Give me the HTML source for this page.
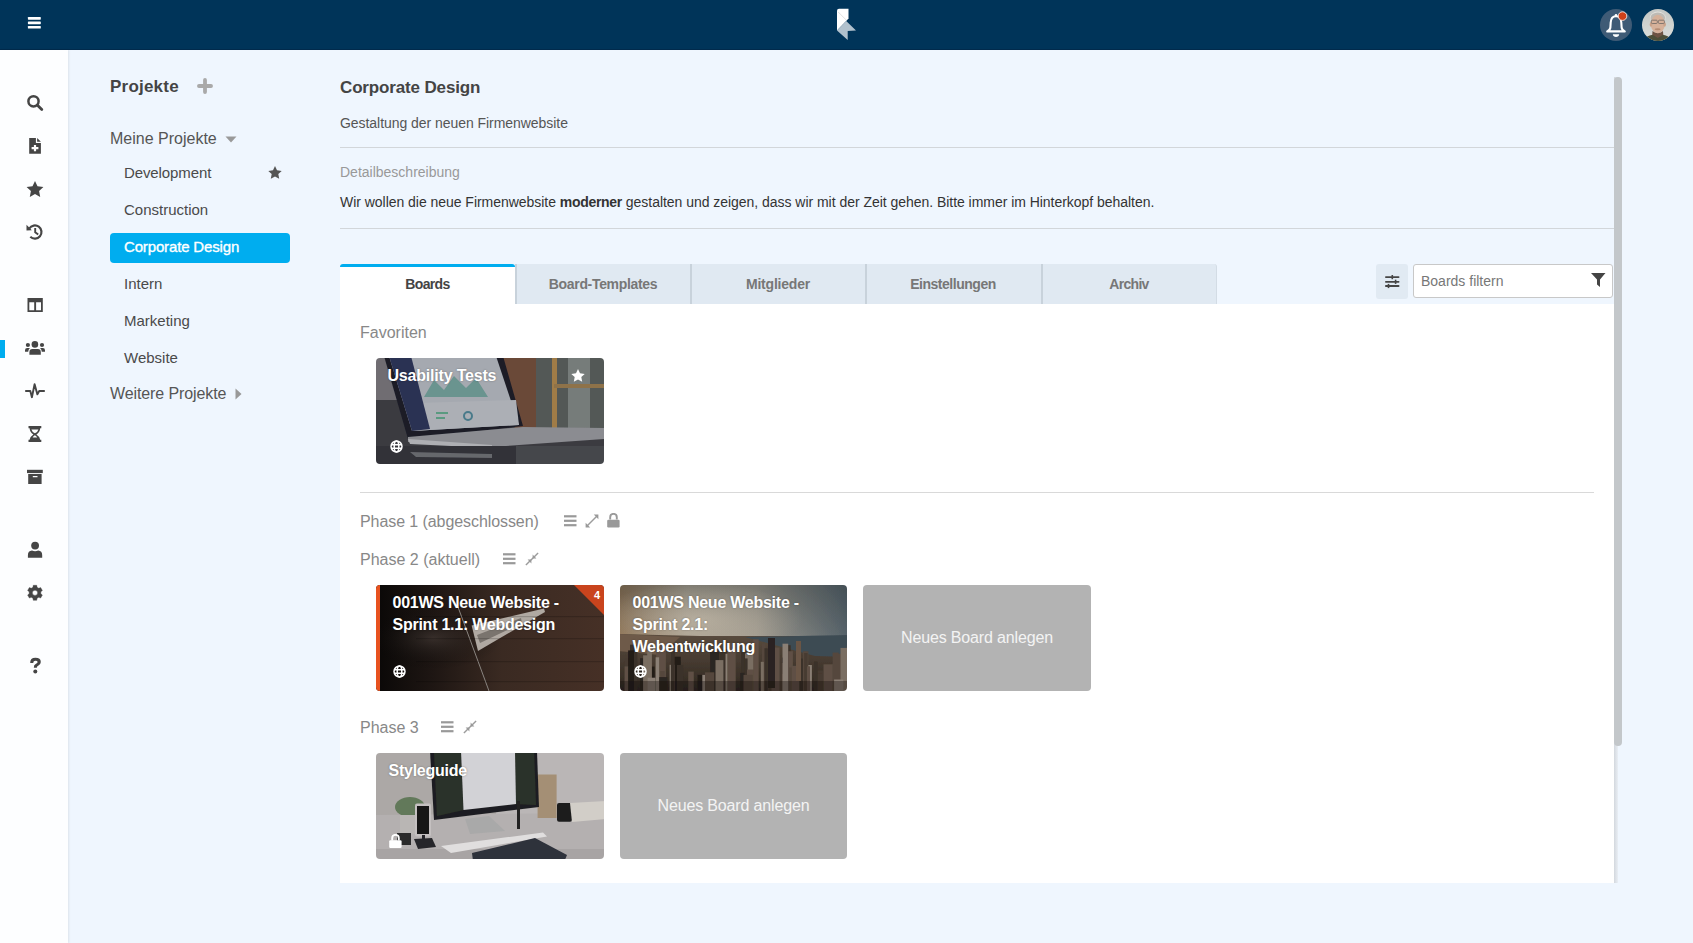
<!DOCTYPE html>
<html><head><meta charset="utf-8">
<style>
*{box-sizing:border-box;margin:0;padding:0}
html,body{width:1693px;height:943px;overflow:hidden;background:#eff6fe;font-family:"Liberation Sans",sans-serif;color:#444}
.abs{position:absolute}
.t{position:absolute;white-space:nowrap;line-height:1}
#hdr{left:0;top:0;width:1693px;height:50px;background:#003459;border-bottom:1px solid #012a4c}
#side{left:0;top:50px;width:68px;height:893px;background:#fdfeff;box-shadow:1px 0 2px rgba(0,0,0,0.08)}
.ic{position:absolute;fill:#454545}
.proj{position:absolute;left:124px;font-size:15px;color:#4a4a4a}
</style></head><body>
<div id="hdr" class="abs">
  <svg class="abs" style="left:27px;top:16px" width="15" height="14" viewBox="0 0 15 14"><rect x="0.9" y="1" width="12.9" height="2.7" rx="0.6" fill="#fff"/><rect x="0.9" y="5.45" width="12.9" height="2.7" rx="0.6" fill="#fff"/><rect x="0.9" y="9.9" width="12.9" height="2.7" rx="0.6" fill="#fff"/></svg>
  <svg class="abs" style="left:830px;top:0" width="34" height="50" viewBox="830 0 34 50">
    <path d="M839 8.7 L848.5 8.7 L848.5 18.6 L846.2 21.1 L837 30.6 L837 10.7 Q837 8.7 839 8.7Z" fill="#fff"/>
    <path d="M838 11.8 L846.2 20" stroke="#d8d8d8" stroke-width="0.8"/>
    <path d="M846.2 21.1 L856 30.6 L847.7 30.9 L847.7 40.1 L837 30.6Z" fill="#b1c1cd"/>
  </svg>
  <div class="abs" style="left:1600px;top:9px;width:32px;height:32px;border-radius:50%;background:#3f5b76"></div>
  <svg class="abs" style="left:1600px;top:9px" width="32" height="32" viewBox="0 0 32 32">
    <circle cx="16" cy="6.2" r="1.3" fill="#fff"/><path d="M16 7.2 C12.6 7.2 10.9 9.8 10.7 13.5 L10.4 18.3 C10.2 20.4 8.7 21.6 7.2 22.4 H24.8 C23.3 21.6 21.8 20.4 21.6 18.3 L21.3 13.5 C21.1 9.8 19.4 7.2 16 7.2Z" fill="none" stroke="#fff" stroke-width="2.1" stroke-linejoin="round"/>
    <path d="M12.8 25.2 H19.2 Q18.8 27.9 16 27.9 Q13.2 27.9 12.8 25.2Z" fill="#fff"/>
    <circle cx="22.5" cy="7.1" r="4.3" fill="#d0411a" stroke="#fff" stroke-width="0.8"/>
  </svg>
  <svg class="abs" style="left:1642px;top:9px" width="32" height="32" viewBox="0 0 32 32">
   <defs><clipPath id="avc"><circle cx="16" cy="16" r="16"/></clipPath><linearGradient id="avg" x1="0" x2="0" y1="0" y2="1"><stop offset="0" stop-color="#c4c7c4"/><stop offset="1" stop-color="#dcdfdc"/></linearGradient></defs>
   <g clip-path="url(#avc)"><rect width="32" height="32" fill="url(#avg)"/>
   <ellipse cx="15.8" cy="8.8" rx="7.9" ry="6.2" fill="#e2e0dc"/><ellipse cx="15.8" cy="9" rx="7.3" ry="5.6" fill="#bdbab4"/>
   <ellipse cx="15.8" cy="15" rx="6.9" ry="9.3" fill="#d6b19a"/>
   <ellipse cx="9" cy="15.5" rx="1.3" ry="2.2" fill="#c9a28a"/>
   <ellipse cx="22.6" cy="15.5" rx="1.3" ry="2.2" fill="#c9a28a"/>
   <rect x="9.3" y="11.2" width="6" height="3.3" rx="1" fill="none" stroke="#7a706a" stroke-width="0.9"/>
   <rect x="16.4" y="11.2" width="6" height="3.3" rx="1" fill="none" stroke="#7a706a" stroke-width="0.9"/>
   <ellipse cx="15.6" cy="20.2" rx="3" ry="1" fill="#b58c74"/>
   <path d="M10.5 22 Q15.8 26.5 21 22 L21.5 30 L10 30Z" fill="#6d5343"/>
   <path d="M1 33 Q4 26.5 10.5 25.8 L15.8 29 L21 25.8 Q27.5 26.5 30 33Z" fill="#4c4f38"/>
   </g></svg>
</div>

<div id="side" class="abs">
</div>
<svg class="abs" style="left:0;top:0" width="68" height="943" viewBox="0 0 68 943">
 <g fill="#454545" stroke="none">
  <!-- search -->
  <circle cx="33.5" cy="101.3" r="5.1" fill="none" stroke="#454545" stroke-width="2.5"/>
  <path d="M37.2 105 L41.8 109.6" stroke="#454545" stroke-width="2.8" stroke-linecap="round"/>
  <!-- file plus -->
  <path d="M29.2 138 H35.9 V142.9 H40.9 V153.7 H29.2Z"/>
  <path d="M37.1 138 L40.9 141.8 H37.1Z"/>
  <path d="M33.9 145 h2.2 v2 h2.3 v2.2 h-2.3 v2 h-2.2 v-2 h-2.3 v-2.2 h2.3z" fill="#fff"/>
  <!-- star -->
  <path d="M35 181 L37.5 186.3 L43.4 187.1 L39.1 191.1 L40.2 196.9 L35 194.1 L29.8 196.9 L30.9 191.1 L26.6 187.1 L32.5 186.3Z"/>
  <!-- history -->
  <path d="M29.3 228.5 A6.6 6.6 0 1 1 30.3 236.8" fill="none" stroke="#454545" stroke-width="2.2"/>
  <path d="M26.5 224.8 L31.8 230.2 L26.5 230.6Z"/>
  <path d="M35.2 228 V232.3 L38.2 234.6" fill="none" stroke="#454545" stroke-width="1.9"/>
  <!-- columns -->
  <path d="M27.5 298 H42.8 V312 H27.5Z M29.3 302.3 V310.2 H34.2 V302.3Z M36.1 302.3 V310.2 H41 V302.3Z" fill-rule="evenodd"/>
  <!-- users -->
  <circle cx="34.9" cy="344.4" r="3.3"/>
  <path d="M29.4 354.8 V352.3 Q29.4 349.1 32.4 349.1 H37.8 Q40.8 349.1 40.8 352.3 V354.8Z"/>
  <circle cx="27.9" cy="345" r="2.1"/>
  <circle cx="42" cy="345" r="2.1"/>
  <path d="M25 351.8 V350.3 Q25 348.1 27.2 348.1 H29.9 Q28.3 349.5 28.2 351.8Z"/>
  <path d="M45 351.8 V350.3 Q45 348.1 42.8 348.1 H40.1 Q41.7 349.5 41.8 351.8Z"/>
  <!-- pulse -->
  <path d="M25.2 391 H30.3 L31.9 397.2 L34.6 384.2 L37.4 394.4 L39.2 391 H44.8" fill="none" stroke="#454545" stroke-width="1.9" stroke-linejoin="round"/>
  <!-- hourglass -->
  <path d="M28.5 426 H41.3 V428.3 H40.2 Q40 432.2 36.4 434.6 Q40 437 40.2 439.7 H41.3 V442 H28.5 V439.7 H29.6 Q29.8 437 33.4 434.6 Q29.8 432.2 29.6 428.3 H28.5Z M31.4 429.4 Q32 431.7 34.9 433.3 Q37.8 431.7 38.4 429.4Z M34.9 435.3 Q33.3 436.3 32.6 437.5 H37.2 Q36.5 436.3 34.9 435.3Z" fill-rule="evenodd"/>
  <!-- archive -->
  <path d="M27 469.8 H42.8 V473.1 H27Z"/>
  <path d="M28.2 474 H41.6 V484 H28.2Z M32.8 475.9 V477.2 H37.5 V475.9Z" fill-rule="evenodd"/>
  <!-- user -->
  <circle cx="35.1" cy="545.6" r="3.9"/>
  <path d="M27.9 557.7 V555.3 Q27.9 550.8 32 550.5 Q35.1 551.8 38.2 550.5 Q42.2 550.8 42.2 555.3 V557.7Z"/>
  <!-- cog -->
  <path d="M32.94 587.27 L33.27 585.30 L36.73 585.30 L37.06 587.27 L38.76 588.25 L40.63 587.55 L42.36 590.55 L40.82 591.82 L40.82 593.78 L42.36 595.05 L40.63 598.05 L38.76 597.35 L37.06 598.33 L36.73 600.30 L33.27 600.30 L32.94 598.33 L31.24 597.35 L29.37 598.05 L27.64 595.05 L29.18 593.78 L29.18 591.82 L27.64 590.55 L29.37 587.55 L31.24 588.25Z M35 590.1999999999999 A2.6 2.6 0 1 0 35 595.4 A2.6 2.6 0 1 0 35 590.1999999999999Z" fill-rule="evenodd" stroke="#454545" stroke-width="0.4" stroke-linejoin="round"/>
  <!-- question -->
  <path d="M30.2 663 Q30 657.8 35.4 657.8 Q40.8 657.8 40.8 662 Q40.8 664.6 38.2 665.8 Q36.8 666.5 36.8 667.8 L33.8 667.8 Q33.6 665 36 663.8 Q37.6 663 37.6 662.1 Q37.6 660.7 35.4 660.7 Q33.3 660.7 33.2 663Z"/>
  <circle cx="35.3" cy="671.4" r="2"/>
 </g>
 <rect x="0" y="340" width="5" height="18" fill="#00adef"/>
</svg>


<!-- projects sidebar -->
<div class="t" style="left:110px;top:78px;font-size:17px;font-weight:700;color:#444;letter-spacing:0.22px">Projekte</div>
<svg class="abs" style="left:197px;top:78px" width="16" height="16" viewBox="0 0 16 16"><path d="M8 1.95 V14.05 M1.95 8 H14.05" stroke="#a9a9a9" stroke-width="3.8" stroke-linecap="round"/></svg>
<div class="t" style="left:110px;top:131px;font-size:16px;color:#555">Meine Projekte</div>
<svg class="abs" style="left:225px;top:136px" width="12" height="7" viewBox="0 0 12 7"><path d="M0.5 0.5 H11.5 L6 6.5Z" fill="#999"/></svg>
<div class="t proj" style="top:165px;letter-spacing:-0.1px">Development</div>
<svg class="abs" style="left:268px;top:166px" width="14" height="13" viewBox="0 0 14 13"><path d="M7 0 L9 4.3 L13.7 4.9 L10.3 8.1 L11.2 12.8 L7 10.5 L2.8 12.8 L3.7 8.1 L0.3 4.9 L5 4.3Z" fill="#555"/></svg>
<div class="t proj" style="top:202px">Construction</div>
<div class="abs" style="left:110px;top:233px;width:180px;height:30px;background:#00adef;border-radius:4px"></div>
<div class="t proj" style="top:239px;color:#fff;letter-spacing:-0.15px;-webkit-text-stroke:0.35px #fff">Corporate Design</div>
<div class="t proj" style="top:276px">Intern</div>
<div class="t proj" style="top:313px">Marketing</div>
<div class="t proj" style="top:350px">Website</div>
<div class="t" style="left:110px;top:386px;font-size:16px;color:#555;letter-spacing:-0.1px">Weitere Projekte</div>
<svg class="abs" style="left:235px;top:388px" width="7" height="12" viewBox="0 0 7 12"><path d="M0.5 0.5 L6.5 6 L0.5 11.5Z" fill="#999"/></svg>

<!-- main header -->
<div class="t" style="left:340px;top:78.5px;font-size:17px;font-weight:700;color:#444;letter-spacing:-0.15px">Corporate Design</div>
<div class="t" style="left:340px;top:115.5px;font-size:14px;color:#555;letter-spacing:-0.05px">Gestaltung der neuen Firmenwebsite</div>
<div class="abs" style="left:340px;top:147px;width:1274px;height:1px;background:#d2d6da"></div>
<div class="t" style="left:340px;top:165px;font-size:14px;color:#999">Detailbeschreibung</div>
<div class="t" style="left:340px;top:195px;font-size:14px;color:#333;letter-spacing:-0.035px">Wir wollen die neue Firmenwebsite <b style="letter-spacing:-0.3px">moderner</b> gestalten und zeigen, dass wir mit der Zeit gehen. Bitte immer im Hinterkopf behalten.</div>
<div class="abs" style="left:340px;top:228px;width:1274px;height:1px;background:#d2d6da"></div>

<!-- tabs -->
<div class="abs" style="left:340px;top:264px;width:175px;height:40px;background:#fff;border-top:3px solid #00adef;border-radius:3px 3px 0 0"></div>
<div class="t" style="left:340px;top:277px;width:175px;text-align:center;font-size:14px;font-weight:700;color:#444;letter-spacing:-0.65px">Boards</div>
<div class="abs" style="left:515px;top:264px;width:702px;height:40px;background:#e0e9f2;border-radius:0 3px 0 0;border-right:1.5px solid #d3dce5"></div>
<div class="abs" style="left:515px;top:264px;width:1.5px;height:40px;background:#c8d2db"></div>
<div class="abs" style="left:690px;top:264px;width:1.5px;height:40px;background:#c8d2db"></div>
<div class="abs" style="left:865px;top:264px;width:1.5px;height:40px;background:#c8d2db"></div>
<div class="abs" style="left:1041px;top:264px;width:1.5px;height:40px;background:#c8d2db"></div>
<div class="t" style="left:515px;top:277px;width:176px;text-align:center;font-size:14px;font-weight:700;color:#777;letter-spacing:-0.33px">Board-Templates</div>
<div class="t" style="left:690px;top:277px;width:176px;text-align:center;font-size:14px;font-weight:700;color:#777;letter-spacing:-0.2px">Mitglieder</div>
<div class="t" style="left:865px;top:277px;width:176px;text-align:center;font-size:14px;font-weight:700;color:#777;letter-spacing:-0.48px">Einstellungen</div>
<div class="t" style="left:1041px;top:277px;width:176px;text-align:center;font-size:14px;font-weight:700;color:#777;letter-spacing:-0.7px">Archiv</div>

<div class="abs" style="left:1376px;top:264px;width:32px;height:35px;background:#e1eaf3;border-radius:3px"></div>
<svg class="abs" style="left:1385px;top:274px" width="15" height="15" viewBox="0 0 15 15"><g fill="#454545"><rect x="0" y="2.2" width="14.5" height="1.8" rx="0.9"/><rect x="0" y="6.9" width="14.5" height="1.8" rx="0.9"/><rect x="0" y="11.1" width="14.5" height="1.8" rx="0.9"/><rect x="6.5" y="1" width="1.6" height="4.2"/><rect x="9.8" y="5.7" width="1.6" height="4.2"/><rect x="2.7" y="9.9" width="1.6" height="4.2"/></g></svg>
<div class="abs" style="left:1413px;top:264px;width:200px;height:34px;background:#fff;border:1px solid #c8c8c8;border-radius:3px"></div>
<div class="t" style="left:1421px;top:274px;font-size:14px;color:#777">Boards filtern</div>
<svg class="abs" style="left:1591px;top:273px" width="15" height="15" viewBox="0 0 15 15"><path d="M0 0 H14.5 L9 6.5 V14 L6 11.5 V6.5Z" fill="#444"/></svg>

<!-- panel -->
<div class="abs" style="left:340px;top:304px;width:1274px;height:579px;background:#fff"></div>
<div class="abs" style="left:1614px;top:77px;width:4px;height:806px;background:linear-gradient(90deg,#d3d8de,#e9eef4)"></div>
<div class="abs" style="left:1614px;top:77px;width:8px;height:669px;background:#c3c7ca;border-radius:4px"></div>

<div class="t" style="left:360px;top:325px;font-size:16px;color:#888">Favoriten</div>
<div class="abs" style="left:360px;top:492px;width:1234px;height:1px;background:#d9d9d9"></div>
<div class="t" style="left:360px;top:514px;font-size:16px;color:#888;letter-spacing:-0.08px">Phase 1 (abgeschlossen)</div>
<div class="t" style="left:360px;top:552px;font-size:16px;color:#888">Phase 2 (aktuell)</div>
<div class="t" style="left:360px;top:720px;font-size:16px;color:#888">Phase 3</div>
<svg class="abs" style="left:564px;top:515px" width="13" height="12" viewBox="0 0 13 12"><g fill="#999"><rect x="0" y="0.2" width="12.5" height="2.2"/><rect x="0" y="4.7" width="12.5" height="2.2"/><rect x="0" y="9.1" width="12.5" height="2.2"/></g></svg><svg class="abs" style="left:585px;top:514px" width="14" height="14" viewBox="0 0 14 14"><g fill="#999"><path d="M2 12 L12 2" stroke="#9c9c9c" stroke-width="1.4"/><path d="M8.8 0.6 H13.4 V5.2Z"/><path d="M0.6 8.8 V13.4 H5.2Z"/></g></svg><svg class="abs" style="left:607px;top:513px" width="13" height="15" viewBox="0 0 13 15"><path d="M3.2 6.5 V4.3 Q3.2 0.9 6.5 0.9 Q9.8 0.9 9.8 4.3 V6.5" fill="none" stroke="#999" stroke-width="1.9"/><rect x="0.2" y="6.8" width="12.4" height="7.6" rx="1.2" fill="#999"/></svg><svg class="abs" style="left:503px;top:553px" width="13" height="12" viewBox="0 0 13 12"><g fill="#999"><rect x="0" y="0.2" width="12.5" height="2.2"/><rect x="0" y="4.7" width="12.5" height="2.2"/><rect x="0" y="9.1" width="12.5" height="2.2"/></g></svg><svg class="abs" style="left:525px;top:552px" width="14" height="14" viewBox="0 0 14 14"><g fill="#999"><path d="M0.9 13.1 L13.1 0.9" stroke="#9c9c9c" stroke-width="1.4"/><path d="M7.6 2.6 V6.4 H11.4Z"/><path d="M6.4 11.4 V7.6 H2.6Z"/></g></svg><svg class="abs" style="left:441px;top:721px" width="13" height="12" viewBox="0 0 13 12"><g fill="#999"><rect x="0" y="0.2" width="12.5" height="2.2"/><rect x="0" y="4.7" width="12.5" height="2.2"/><rect x="0" y="9.1" width="12.5" height="2.2"/></g></svg><svg class="abs" style="left:463px;top:720px" width="14" height="14" viewBox="0 0 14 14"><g fill="#999"><path d="M0.9 13.1 L13.1 0.9" stroke="#9c9c9c" stroke-width="1.4"/><path d="M7.6 2.6 V6.4 H11.4Z"/><path d="M6.4 11.4 V7.6 H2.6Z"/></g></svg><div class="abs" style="left:376px;top:358px;width:228px;height:106px;border-radius:4px;overflow:hidden">
<svg width="228" height="106" viewBox="0 0 228 106" style="display:block">
 <defs><filter id="bl" x="-5%" y="-5%" width="110%" height="110%"><feGaussianBlur stdDeviation="0.7"/></filter></defs>
 <g filter="url(#bl)">
 <rect x="-2" y="-2" width="232" height="110" fill="#3b3b40"/>
 <rect x="-2" y="-2" width="40" height="44" fill="#6f6d72"/>
 <polygon points="118,-2 165,-2 165,74 140,74" fill="#6b4839"/>
 <rect x="160" y="-2" width="70" height="76" fill="#535856"/>
 <rect x="192" y="-2" width="22" height="76" fill="#767b7a"/>
 <rect x="176" y="-2" width="5" height="76" fill="#a07c46"/>
 <rect x="178" y="26" width="52" height="4" fill="#8e7249"/>
 <polygon points="8,-2 127,-2 147,68 32,81" fill="#1c1e28"/>
 <polygon points="13,-2 120,-2 143,67 36,73" fill="#a5a9b0"/>
 <polygon points="40,45 140,42 143,67 36,73" fill="#acafb5"/>
 <circle cx="92" cy="58" r="4" fill="none" stroke="#4a7a8a" stroke-width="2"/>
 <rect x="60" y="54" width="12" height="2" fill="#5a9a80"/><rect x="60" y="59" width="9" height="2" fill="#5a9a80"/>
 <polygon points="13,-2 35,-2 54,71 36,73" fill="#2b3152"/>
 <polygon points="48,39 58,22 68,32 78,18 90,30 100,20 112,39" fill="#6a948f"/>
 <polygon points="32,79 147,69 228,70 228,81 116,89 32,84" fill="#8b8c91"/>
 <polygon points="32,81 116,87 116,90 34,86" fill="#aeafb3"/>
 <rect x="-2" y="88" width="232" height="20" fill="#303137"/>
 <polygon points="34,94 116,96 116,100 40,99" fill="#66676c"/>
 <rect x="140" y="88" width="88" height="18" fill="#45474b"/>
 </g>
</svg>
<div class="t" style="left:11.5px;top:7px;font-size:16px;font-weight:700;color:#fff;line-height:22px;text-shadow:0 0 2px rgba(0,0,0,0.35);letter-spacing:-0.2px">Usability Tests</div>
<svg class="abs" style="left:195px;top:11px" width="14" height="13" viewBox="0 0 14 13"><path d="M7 0 L9 4.3 L13.7 4.9 L10.3 8.1 L11.2 12.8 L7 10.5 L2.8 12.8 L3.7 8.1 L0.3 4.9 L5 4.3Z" fill="#fff"/></svg>
<svg class="abs" style="left:14px;top:82px" width="13" height="13" viewBox="0 0 13 13"><g fill="none" stroke="#fff" stroke-width="1.5"><circle cx="6.5" cy="6.5" r="5.5"/><ellipse cx="6.5" cy="6.5" rx="2.3" ry="5.5"/><path d="M1.2 4.7 H11.8 M1.2 8.3 H11.8"/></g></svg>
</div><div class="abs" style="left:376px;top:585px;width:228px;height:106px;border-radius:4px;overflow:hidden">
<svg width="228" height="106" viewBox="0 0 228 106" style="display:block">
 <defs><linearGradient id="gB" x1="0" x2="1" y1="0" y2="0"><stop offset="0" stop-color="#0a0807"/><stop offset="0.25" stop-color="#1e1613"/><stop offset="0.55" stop-color="#3a2a22"/><stop offset="1" stop-color="#463026"/></linearGradient>
 <radialGradient id="gB2" cx="0.25" cy="0.5" r="0.3"><stop offset="0" stop-color="rgba(80,70,65,0.5)"/><stop offset="1" stop-color="rgba(0,0,0,0)"/></radialGradient></defs>
 <rect width="228" height="106" fill="url(#gB)"/>
 <rect width="228" height="106" fill="url(#gB2)"/>
 <polygon points="95.6,40.4 168,23.6 169,27 102,66" fill="#b0a9a2"/><polygon points="101,50 145,33 146,38 104,58" fill="#7a746e"/>
 <path d="M82 22 L113 106" stroke="#8a8580" stroke-width="1"/><g fill="rgba(0,0,0,0.18)"><rect x="40" y="31" width="190" height="1.2"/><rect x="40" y="53" width="190" height="1.2"/><rect x="40" y="76" width="190" height="1.2"/><rect x="40" y="96" width="190" height="1.2"/></g>
 <rect x="0" y="0" width="4" height="106" fill="#e8521f"/>
 <polygon points="198,0 228,0 228,30" fill="#c9441d"/>
</svg>
<div class="t" style="left:16.5px;top:6.5px;font-size:16px;font-weight:700;color:#fff;line-height:22px;text-shadow:0 0 2px rgba(0,0,0,0.35);letter-spacing:-0.25px">001WS Neue Website -<br>Sprint 1.1: Webdesign</div>
<div class="t" style="left:218px;top:5px;font-size:11px;font-weight:700;color:#fff">4</div>
<svg class="abs" style="left:17px;top:80px" width="13" height="13" viewBox="0 0 13 13"><g fill="none" stroke="#fff" stroke-width="1.5"><circle cx="6.5" cy="6.5" r="5.5"/><ellipse cx="6.5" cy="6.5" rx="2.3" ry="5.5"/><path d="M1.2 4.7 H11.8 M1.2 8.3 H11.8"/></g></svg>
</div><div class="abs" style="left:620px;top:585px;width:227px;height:106px;border-radius:4px;overflow:hidden">
<svg width="227" height="106" viewBox="0 0 227 106" style="display:block">
 <defs><linearGradient id="gC" x1="0" x2="1" y1="0" y2="0"><stop offset="0" stop-color="#8f7456"/><stop offset="0.3" stop-color="#a89f8f"/><stop offset="0.6" stop-color="#a09a8e"/><stop offset="1" stop-color="#55626a"/></linearGradient>
 <linearGradient id="gCv" x1="0" x2="0" y1="0" y2="1"><stop offset="0" stop-color="rgba(20,30,35,0.30)"/><stop offset="0.5" stop-color="rgba(20,30,35,0)"/></linearGradient>
 <radialGradient id="gCh" cx="0.35" cy="0.45" r="0.45"><stop offset="0" stop-color="rgba(205,195,178,0.55)"/><stop offset="1" stop-color="rgba(205,195,178,0)"/></radialGradient>
 <linearGradient id="gC2" x1="0" x2="0" y1="0" y2="1"><stop offset="0" stop-color="#5a4c3e"/><stop offset="1" stop-color="#2e2620"/></linearGradient>
 <filter id="bl2" x="-5%" y="-5%" width="110%" height="110%"><feGaussianBlur stdDeviation="0.5"/></filter></defs>
 <g filter="url(#bl2)">
 <rect x="-2" y="-2" width="231" height="110" fill="url(#gC)"/>
 <rect x="-2" y="-2" width="231" height="110" fill="url(#gCv)"/>
 <rect x="-2" y="-2" width="231" height="80" fill="url(#gCh)"/>
 <polygon points="-2,49 80,51 229,51 229,108 -2,108" fill="url(#gC2)"/>
 <polygon points="-2,49 60,52 40,70 -2,66" fill="#6e5a48"/>
 <polygon points="125,52 229,50 229,72 195,71" fill="#3e4b53"/>
 <rect x="54.0" y="71.7" width="6.8" height="36.3" fill="#221c18"/>
 <rect x="142.0" y="58.5" width="3.5" height="49.5" fill="#54473c"/>
 <rect x="125.0" y="84.5" width="4.3" height="23.5" fill="#221c18"/>
 <rect x="90.1" y="66.6" width="9.0" height="41.4" fill="#2c2520"/>
 <rect x="197.0" y="85.4" width="6.7" height="22.6" fill="#463a30"/>
 <rect x="36.2" y="59.6" width="9.7" height="48.4" fill="#5e5044"/>
 <rect x="187.0" y="80.0" width="4.9" height="28.0" fill="#8a7f74"/>
 <rect x="162.1" y="72.6" width="9.4" height="35.4" fill="#221c18"/>
 <rect x="218.8" y="71.5" width="3.9" height="36.5" fill="#5e5044"/>
 <rect x="30.9" y="93.7" width="4.5" height="14.3" fill="#8a7f74"/>
 <rect x="176.8" y="73.6" width="9.0" height="34.4" fill="#3a3029"/>
 <rect x="121.2" y="66.6" width="5.9" height="41.4" fill="#3a3029"/>
 <rect x="154.8" y="89.7" width="9.5" height="18.3" fill="#2c2520"/>
 <rect x="158.6" y="78.0" width="5.3" height="30.0" fill="#463a30"/>
 <rect x="162.0" y="88.8" width="4.5" height="19.2" fill="#54473c"/>
 <rect x="28.2" y="81.6" width="6.4" height="26.4" fill="#221c18"/>
 <rect x="20.1" y="73.2" width="8.6" height="34.8" fill="#2c2520"/>
 <rect x="4.6" y="73.4" width="6.0" height="34.6" fill="#463a30"/>
 <rect x="10.0" y="59.7" width="7.3" height="48.3" fill="#3a3029"/>
 <rect x="125.0" y="68.3" width="9.5" height="39.7" fill="#7a6e62"/>
 <rect x="226.7" y="60.8" width="5.2" height="47.2" fill="#5e5044"/>
 <rect x="215.4" y="68.8" width="9.8" height="39.2" fill="#54473c"/>
 <rect x="35.5" y="90.1" width="3.3" height="17.9" fill="#3a3029"/>
 <rect x="81.8" y="89.9" width="4.0" height="18.1" fill="#8a7f74"/>
 <rect x="104.5" y="81.8" width="6.6" height="26.2" fill="#463a30"/>
 <rect x="140.8" y="76.8" width="9.6" height="31.2" fill="#7a6e62"/>
 <rect x="212.6" y="67.6" width="6.1" height="40.4" fill="#54473c"/>
 <rect x="124.5" y="73.4" width="3.1" height="34.6" fill="#3a3029"/>
 <rect x="4.6" y="81.4" width="7.3" height="26.6" fill="#5e5044"/>
 <rect x="143.8" y="71.1" width="5.3" height="36.9" fill="#54473c"/>
 <rect x="167.5" y="60.2" width="3.2" height="47.8" fill="#3a3029"/>
 <rect x="57.0" y="79.9" width="6.2" height="28.1" fill="#3a3029"/>
 <rect x="40.3" y="86.0" width="4.3" height="22.0" fill="#54473c"/>
 <rect x="68.2" y="86.6" width="5.6" height="21.4" fill="#5e5044"/>
 <rect x="220.5" y="62.9" width="7.8" height="45.1" fill="#7a6e62"/>
 <rect x="148.4" y="70.1" width="4.9" height="37.9" fill="#463a30"/>
 <rect x="23.1" y="70.3" width="5.3" height="37.7" fill="#7a6e62"/>
 <rect x="99.5" y="64.3" width="9.0" height="43.7" fill="#3a3029"/>
 <rect x="168.4" y="66.2" width="4.5" height="41.8" fill="#5e5044"/>
 <rect x="120.2" y="87.9" width="4.3" height="20.1" fill="#2c2520"/>
 <rect x="196.1" y="88.6" width="5.4" height="19.4" fill="#463a30"/>
 <rect x="183.0" y="66.3" width="5.4" height="41.7" fill="#54473c"/>
 <rect x="105.5" y="68.7" width="7.4" height="39.3" fill="#8a7f74"/>
 <rect x="8.1" y="65.4" width="5.9" height="42.6" fill="#221c18"/>
 <rect x="214.1" y="94.5" width="9.2" height="13.5" fill="#8a7f74"/>
 <rect x="126.9" y="84.5" width="9.9" height="23.5" fill="#5e5044"/>
 <rect x="169.2" y="82.5" width="8.9" height="25.5" fill="#54473c"/>
 <rect x="123.5" y="89.9" width="9.2" height="18.1" fill="#54473c"/>
 <rect x="27.2" y="59.3" width="4.7" height="48.7" fill="#7a6e62"/>
 <rect x="203.5" y="79.3" width="9.3" height="28.7" fill="#5e5044"/>
 <rect x="109.2" y="76.6" width="3.8" height="31.4" fill="#7a6e62"/>
 <rect x="150.5" y="73.3" width="6.7" height="34.7" fill="#463a30"/>
 <rect x="77.5" y="89.9" width="4.8" height="18.1" fill="#221c18"/>
 <rect x="184.2" y="68.0" width="3.4" height="40.0" fill="#463a30"/>
 <rect x="38.9" y="92.1" width="8.5" height="15.9" fill="#2c2520"/>
 <rect x="186.9" y="81.3" width="3.1" height="26.7" fill="#5e5044"/>
 <rect x="171.7" y="80.9" width="4.7" height="27.1" fill="#5e5044"/>
 <rect x="107.3" y="58.1" width="8.4" height="49.9" fill="#5e5044"/>
 <rect x="176.0" y="59.8" width="3.3" height="48.2" fill="#5e5044"/>
 <rect x="194.0" y="76.6" width="3.6" height="31.4" fill="#3a3029"/>
 <rect x="35.6" y="72.3" width="3.5" height="35.7" fill="#8a7f74"/>
 <rect x="133.2" y="54.2" width="5.5" height="53.8" fill="#5e5044"/>
 <rect x="162.5" y="58.7" width="5.7" height="49.3" fill="#8a7f74"/>
 <rect x="144.5" y="63.3" width="3.3" height="44.7" fill="#3a3029"/>
 <rect x="95.5" y="75.1" width="7.9" height="32.9" fill="#7a6e62"/>
 <rect x="49.6" y="79.8" width="4.9" height="28.2" fill="#8a7f74"/>
 <rect x="50.9" y="59.0" width="3.9" height="49.0" fill="#3a3029"/>
 <rect x="85.0" y="87.3" width="9.3" height="20.7" fill="#54473c"/>
 <rect x="27.6" y="92.7" width="7.8" height="15.3" fill="#8a7f74"/>
 <rect x="151.5" y="62.6" width="8.1" height="45.4" fill="#5e5044"/>
 <rect x="148" y="53" width="7" height="50" fill="#2a2421"/>
 <rect x="176" y="56" width="5" height="40" fill="#6a5545"/>
 <rect x="-2" y="96" width="231" height="12" fill="rgba(20,15,12,0.35)"/>
 </g>
</svg>
<div class="t" style="left:12.5px;top:6.5px;font-size:16px;font-weight:700;color:#fff;line-height:22px;text-shadow:0 0 2px rgba(0,0,0,0.35);letter-spacing:-0.25px">001WS Neue Website -<br>Sprint 2.1:<br>Webentwicklung</div>
<svg class="abs" style="left:14px;top:80px" width="13" height="13" viewBox="0 0 13 13"><g fill="none" stroke="#fff" stroke-width="1.5"><circle cx="6.5" cy="6.5" r="5.5"/><ellipse cx="6.5" cy="6.5" rx="2.3" ry="5.5"/><path d="M1.2 4.7 H11.8 M1.2 8.3 H11.8"/></g></svg>
</div><div class="abs" style="left:863px;top:585px;width:228px;height:106px;border-radius:4px;background:#b3b3b3"></div><div class="t" style="left:863px;top:630px;width:228px;text-align:center;font-size:16px;color:#f3f3f3;letter-spacing:-0.15px">Neues Board anlegen</div><div class="abs" style="left:376px;top:753px;width:228px;height:106px;border-radius:4px;overflow:hidden">
<svg width="228" height="106" viewBox="0 0 228 106" style="display:block">
 <defs><filter id="bl3" x="-5%" y="-5%" width="110%" height="110%"><feGaussianBlur stdDeviation="0.6"/></filter></defs>
 <g filter="url(#bl3)">
 <rect x="-2" y="-2" width="232" height="110" fill="#aca8a6"/>
 <rect x="120" y="-2" width="110" height="70" fill="#bab6b6"/>
 <polygon points="-2,62 230,60 230,108 -2,108" fill="#b4b0b0"/>
 <rect x="-2" y="96" width="232" height="12" fill="#a8a4a4"/>
 <rect x="161.6" y="21.5" width="19" height="43.5" fill="#a48f74"/>
 <polygon points="54,-2 161,-2 163,54 58,67" fill="#1e1f22"/>
 <polygon points="58,-2 85,-2 87.5,57 61,63" fill="#2c3329"/>
 <polygon points="139,-2 158,-2 160,52 140,51" fill="#2c3329"/>
 <polygon points="85,-2 139,-2 140,51 87.5,57" fill="#d2d2d6"/>
 <polygon points="89,66 113,63 129,78 94,81" fill="#a9a9a9"/>
 <ellipse cx="34" cy="54" rx="15" ry="10" fill="#62795a"/>
 <rect x="24" y="62" width="15" height="19" fill="#b9b6b4"/>
 <rect x="39" y="50.5" width="16" height="33" rx="2" fill="#c4c0c0"/>
 <rect x="41" y="53" width="12" height="28" fill="#141414"/>
 <polygon points="38,86 56,85 60,94 42,96" fill="#28282a"/>
 <rect x="46" y="82" width="3" height="6" fill="#28282a"/>
 <polygon points="65,93 167,79.5 171,83.5 75,100" fill="#e0dede"/>
 <polygon points="96,100 159,85 191,102 188.5,108 97,108" fill="#2d303b"/>
 <rect x="181" y="50" width="15" height="18.7" rx="2" fill="#1e1e1e"/>
 <polygon points="194,50 230,48 230,66 196,69" fill="#d2cec8"/>
 <rect x="21" y="80" width="14" height="12" fill="#2a2a2a"/>
 <rect x="141" y="48" width="3" height="28" fill="#222"/>
 </g>
</svg>
<div class="t" style="left:12.5px;top:7px;font-size:16px;font-weight:700;color:#fff;line-height:22px;text-shadow:0 0 2px rgba(0,0,0,0.35);letter-spacing:-0.25px">Styleguide</div>
<svg class="abs" style="left:13px;top:81px" width="13" height="15" viewBox="0 0 13 15"><path d="M3.2 6.5 V4.3 Q3.2 0.9 6.5 0.9 Q9.8 0.9 9.8 4.3 V6.5" fill="none" stroke="#fff" stroke-width="1.9"/><rect x="0.2" y="6.2" width="12.4" height="7.8" rx="1.2" fill="#fff"/></svg>
</div><div class="abs" style="left:620px;top:753px;width:227px;height:106px;border-radius:4px;background:#b3b3b3"></div><div class="t" style="left:620px;top:798px;width:227px;text-align:center;font-size:16px;color:#f3f3f3;letter-spacing:-0.15px">Neues Board anlegen</div>
</body></html>
